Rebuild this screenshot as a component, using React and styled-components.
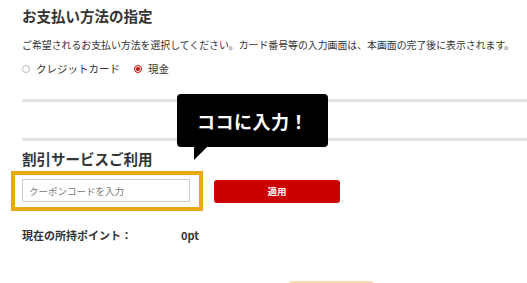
import { useState } from "react";
import styled, { createGlobalStyle } from "styled-components";

const GlobalStyle = createGlobalStyle`
  html, body {
    margin: 0;
    padding: 0;
    background: #ffffff;
  }
  body {
    font-family: "Noto Sans CJK JP", "Noto Sans", sans-serif;
    color: #333333;
  }
`;

const Page = styled.div`
  position: relative;
  width: 527px;
  height: 283px;
  overflow: hidden;
  background: #ffffff;
`;

const Section = styled.section`
  display: flex;
  flex-direction: column;
  padding-left: 22px;
`;

const Title = styled.h2`
  margin: ${(props) => props.top}px 0 0;
  font-size: 14.5px;
  line-height: 18px;
  font-weight: 700;
  color: #333333;
  white-space: nowrap;
`;

const Description = styled.p`
  margin: 13px 0 0;
  font-size: 9.9px;
  line-height: 14px;
  color: #333333;
  white-space: nowrap;
`;

const RadioRow = styled.div`
  display: flex;
  align-items: center;
  gap: 14px;
  margin-top: 10px;
  height: 14px;
`;

const RadioLabel = styled.label`
  display: flex;
  align-items: center;
  gap: 6px;
  font-size: 10.5px;
  line-height: 14px;
  color: #333333;
  cursor: pointer;
  white-space: nowrap;
`;

const RadioDot = styled.span`
  position: relative;
  box-sizing: border-box;
  width: 8px;
  height: 8px;
  border-radius: 50%;
  border: 1px solid ${(props) => (props.checked ? "#cc0000" : "#bbbbbb")};
  background: #ffffff;

  &::after {
    content: "";
    position: absolute;
    inset: 1px;
    border-radius: 50%;
    background: ${(props) => (props.checked ? "#cc0000" : "transparent")};
  }
`;

const Divider = styled.div`
  height: 3px;
  margin-top: ${(props) => props.top}px;
  margin-left: 22px;
  background: #e4e4e4;
`;

const CouponRow = styled.div`
  display: flex;
  align-items: center;
  gap: 11px;
  margin-top: 3px;
  padding-left: 11px;
`;

const Highlight = styled.div`
  display: flex;
  padding: 4px 9px 5px 7px;
  border: 4px solid #e8a913;
`;

const CouponInput = styled.input`
  box-sizing: border-box;
  width: 168px;
  height: 23px;
  padding: 0 6px;
  border: 1px solid #cccccc;
  font-family: "Noto Sans CJK JP", "Noto Sans", sans-serif;
  font-size: 9.5px;
  color: #333333;
  outline: none;

  &::placeholder {
    color: #777777;
  }
`;

const ApplyButton = styled.button`
  width: 126px;
  height: 23px;
  border: none;
  border-radius: 3px;
  background: #cc0000;
  color: #ffffff;
  font-family: "Noto Sans CJK JP", "Noto Sans", sans-serif;
  font-size: 9.5px;
  font-weight: 700;
  cursor: pointer;
`;

const PointRow = styled.div`
  display: grid;
  grid-template-columns: 159px auto;
  margin-top: 17px;
  font-size: 11px;
  line-height: 14px;
  font-weight: 700;
  color: #333333;
  white-space: nowrap;
`;

const BottomButton = styled.div`
  width: 85px;
  height: 10px;
  margin-top: 39px;
  margin-left: 267px;
  border-top: 2px solid #fcdcae;
  border-radius: 3px 3px 0 0;
`;

const Bubble = styled.div`
  position: absolute;
  left: 177px;
  top: 94px;
  width: 151px;
  height: 53px;
  display: flex;
  align-items: center;
  justify-content: center;
  background: #000000;
  border-radius: 4px;
  color: #ffffff;
  font-size: 18px;
  font-weight: 700;
  letter-spacing: 0.5px;

  &::after {
    content: "";
    position: absolute;
    left: 17px;
    top: 52px;
    border-left: 0 solid transparent;
    border-right: 14px solid transparent;
    border-top: 14px solid #000000;
  }
`;

function App() {
  const [method, setMethod] = useState("cash");
  const [code, setCode] = useState("");

  return (
    <Page>
      <GlobalStyle />
      <Section>
        <Title top={7}>お支払い方法の指定</Title>
        <Description>
          ご希望されるお支払い方法を選択してください。カード番号等の入力画面は、本画面の完了後に表示されます。
        </Description>
        <RadioRow>
          <RadioLabel onClick={() => setMethod("card")}>
            <RadioDot checked={method === "card"} />
            クレジットカード
          </RadioLabel>
          <RadioLabel onClick={() => setMethod("cash")}>
            <RadioDot checked={method === "cash"} />
            現金
          </RadioLabel>
        </RadioRow>
      </Section>

      <Divider top={23} />
      <Divider top={36} />

      <Section>
        <Title top={9}>割引サービスご利用</Title>
      </Section>
      <CouponRow>
        <Highlight>
          <CouponInput
            placeholder="クーポンコードを入力"
            value={code}
            onChange={(e) => setCode(e.target.value)}
          />
        </Highlight>
        <ApplyButton>適用</ApplyButton>
      </CouponRow>
      <Section>
        <PointRow>
          <span>現在の所持ポイント：</span>
          <span>0pt</span>
        </PointRow>
        <BottomButton />
      </Section>

      <Bubble>ココに入力！</Bubble>
    </Page>
  );
}

export default App;
